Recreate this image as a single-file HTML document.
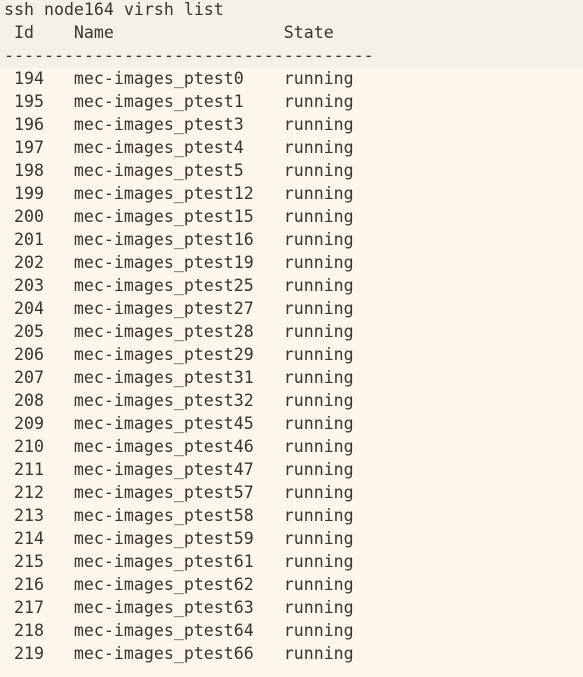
<!DOCTYPE html>
<html><head><meta charset="utf-8"><style>
html,body{margin:0;padding:0;}
body{width:583px;height:677px;overflow:hidden;background:#fdf6ea;position:relative;}
.band{position:absolute;left:0;top:0;width:583px;height:68px;background:#f4f1e6;}
pre{position:absolute;left:4px;top:-2px;margin:0;font-family:"DejaVu Sans Mono",monospace;font-size:16.6px;line-height:23px;color:#3b3232;}
</style></head><body>
<div class="band"></div>
<pre>ssh node164 virsh list
 Id    Name                 State
-------------------------------------
 194   mec-images_ptest0    running
 195   mec-images_ptest1    running
 196   mec-images_ptest3    running
 197   mec-images_ptest4    running
 198   mec-images_ptest5    running
 199   mec-images_ptest12   running
 200   mec-images_ptest15   running
 201   mec-images_ptest16   running
 202   mec-images_ptest19   running
 203   mec-images_ptest25   running
 204   mec-images_ptest27   running
 205   mec-images_ptest28   running
 206   mec-images_ptest29   running
 207   mec-images_ptest31   running
 208   mec-images_ptest32   running
 209   mec-images_ptest45   running
 210   mec-images_ptest46   running
 211   mec-images_ptest47   running
 212   mec-images_ptest57   running
 213   mec-images_ptest58   running
 214   mec-images_ptest59   running
 215   mec-images_ptest61   running
 216   mec-images_ptest62   running
 217   mec-images_ptest63   running
 218   mec-images_ptest64   running
 219   mec-images_ptest66   running</pre>
</body></html>
